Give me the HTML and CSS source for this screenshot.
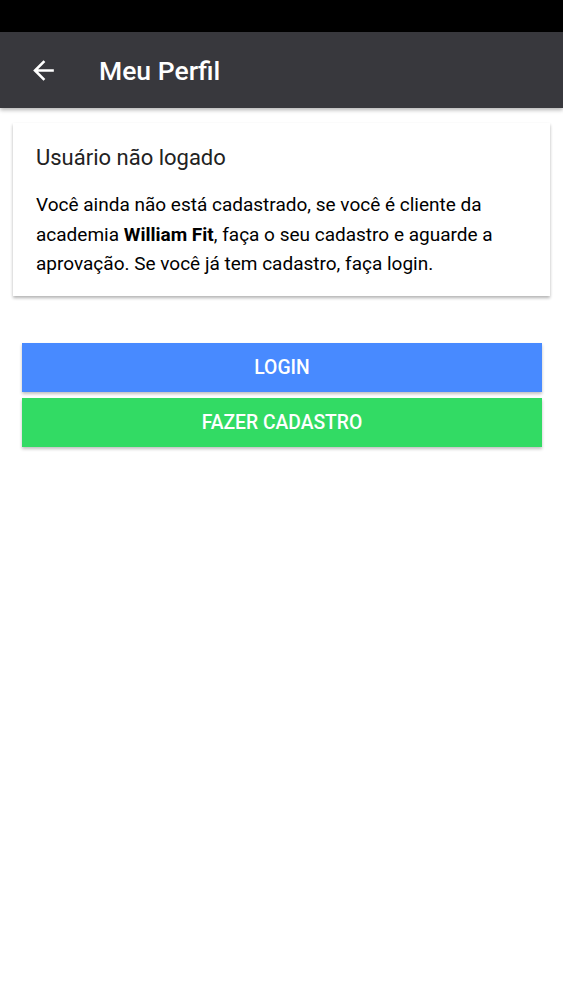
FILE: index.html
```html
<!DOCTYPE html>
<html lang="pt">
<head>
    <meta charset="UTF-8">
    <meta name="viewport" content="width=device-width, initial-scale=1.0">
    <title>Meu Perfil</title>
    <link rel="stylesheet" href="styles.css">
</head>
<body>
    <div class="statusbar"></div>
    <header class="toolbar">
        <button class="back">
            <svg width="31" height="31" viewBox="0 0 24 24"><path d="M20 11H7.83l5.59-5.59L12 4l-8 8 8 8 1.41-1.41L7.83 13H20v-2z" fill="#fff"/></svg>
        </button>
        <h1>Meu Perfil</h1>
    </header>

    <div class="content">
        <div class="card">
            <h2>Usuário não logado</h2>
            <p>Você ainda não está cadastrado, se você é cliente da academia <b>William Fit</b>, faça o seu cadastro e aguarde a aprovação. Se você já tem cadastro, faça login.</p>
        </div>

        <div class="actions">
            <button class="btn btn-primary">Login</button>
            <button class="btn btn-secondary">Fazer cadastro</button>
        </div>
    </div>
</body>
</html>
```

FILE: styles.css
```css
body {
    font-family: Roboto, "Noto Sans", sans-serif;
    margin: 0;
    background: #fff;
    color: #000;
}
.statusbar {
    height: 32px;
    background: #000;
}
.toolbar {
    height: 76px;
    background: #38383d;
    display: flex;
    align-items: center;
    box-shadow: 0 2px 4px rgba(0, 0, 0, 0.3);
    position: relative;
}
.back {
    background: none;
    border: none;
    padding: 0;
    margin-left: 28px;
    width: 31px;
    height: 31px;
    display: flex;
    align-items: center;
    justify-content: center;
}
.toolbar h1 {
    margin: 0 0 0 40px;
    color: #fff;
    font-size: 26.5px;
    font-weight: 500;
}
.content {
    padding: 15px 13px;
}
.card {
    background: #fff;
    box-shadow: 0 2px 3px rgba(0, 0, 0, 0.3);
    padding: 22px 23px 17px;
}
.card h2 {
    margin: 0 0 20px;
    font-size: 22px;
    font-weight: 400;
    color: #222;
}
.card p {
    margin: 0;
    font-size: 19px;
    line-height: 29.5px;
    color: #000;
}
.actions {
    margin: 47px 8px 0 9px;
    display: flex;
    flex-direction: column;
    gap: 6px;
}
.btn {
    height: 49px;
    border: none;
    color: #fff;
    font-family: Roboto, "Noto Sans", sans-serif;
    font-size: 19.3px;
    font-weight: 500;
    text-transform: uppercase;
    box-shadow: 0 2px 3px rgba(0, 0, 0, 0.25);
}
.btn-primary {
    background: #488aff;
}
.btn-secondary {
    background: #32db64;
}
```
